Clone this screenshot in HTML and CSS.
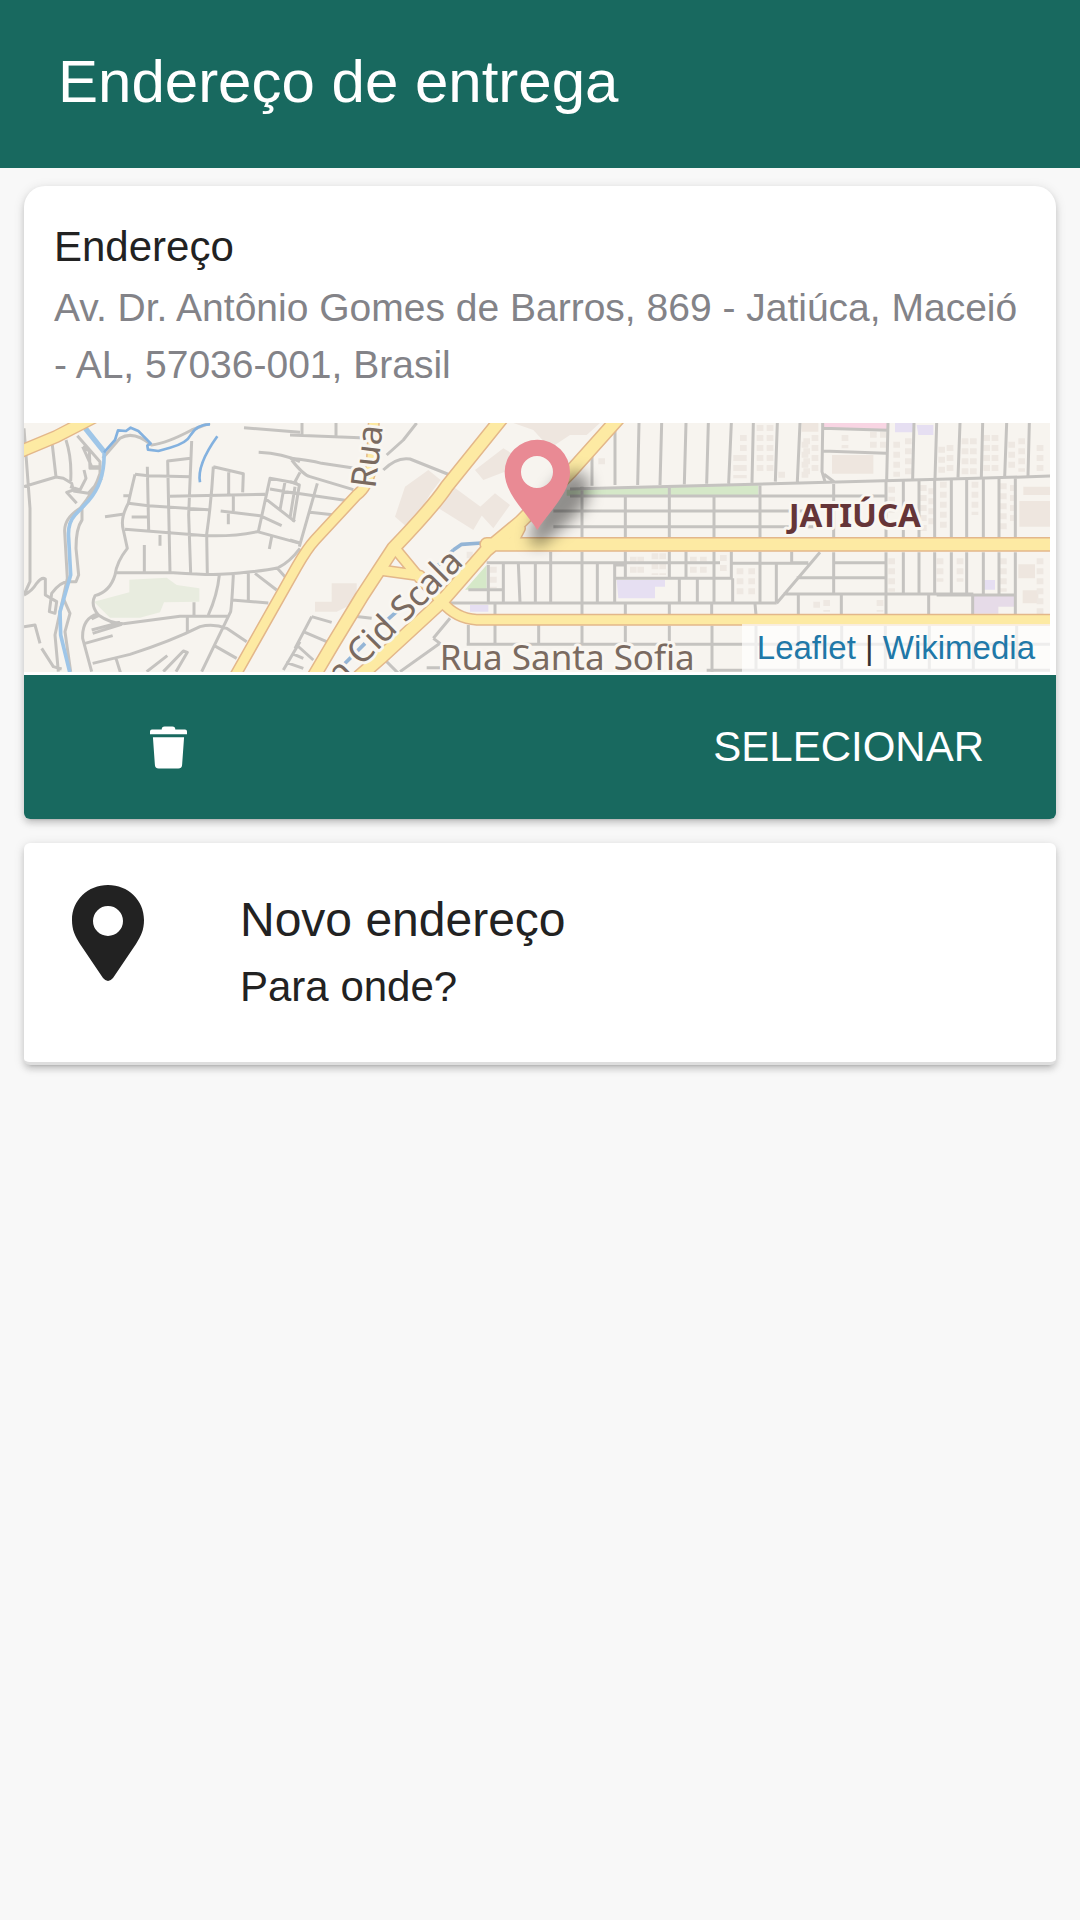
FILE: index.html
```html
<!DOCTYPE html>
<html lang="pt-BR">
<head>
<meta charset="utf-8">
<meta name="viewport" content="width=device-width, initial-scale=1">
<title>Endereço de entrega</title>
<link rel="stylesheet" href="styles.css">
</head>
<body>
<header class="toolbar">
  <h1 class="toolbar-title">Endereço de entrega</h1>
</header>
<main class="content">
  <article class="card address-card">
    <div class="address-text">
      <h2 class="address-title">Endereço</h2>
      <p class="address-line">Av. Dr. Antônio Gomes de Barros, 869 - Jatiúca, Maceió - AL, 57036-001, Brasil</p>
    </div>
    <div class="map">
      <svg class="map-canvas" viewBox="12 24 3078 747" preserveAspectRatio="xMidYMid slice" role="img" aria-label="Mapa">
        <defs>
          <filter id="soft" x="-50%" y="-50%" width="200%" height="200%"><feGaussianBlur stdDeviation="22"/></filter>
        </defs>
        <rect x="0" y="0" width="3110" height="800" fill="#f7f4ef"/>
        <!-- parks -->
        <path fill="#e8ecdf" d="M222 560L328 532V494L440 488L470 510L538 520V560L432 562L420 592L360 608H270Z"/>
        <path fill="#d5e8c8" d="M1640 224L1950 216L2215 210V242H1640ZM1335 524L1400 450V524Z"/>
        <!-- buildings and blocks -->
        <g fill="#eee6df">
          <path d="M1155 215L1225 165L1262 195L1232 235L1185 315L1165 340L1125 305ZM1300 215L1395 285L1360 345L1240 270ZM1370 285L1425 235L1470 270L1420 340ZM1365 165L1450 100L1500 130L1480 160L1390 195ZM1480 24H1740L1700 60H1650L1590 100L1540 45ZM935 505H1010V535L980 575L950 590H885V560H935Z"/>
          <path d="M2436 120H2560V176H2436ZM2998 258H3095V335H2998ZM2995 448H3045V490H2995ZM3008 526H3055V565H3008ZM3010 215H3090V240H3010ZM2345 24H2395V50H2345Z"/>
        </g>
        <g stroke="#eee8e2" stroke-width="20" stroke-dasharray="18 12" fill="none">
          <path d="M1840 425V480M1862 425V480M1905 415V480M1928 415V480M2020 425V475M2050 425V475M2110 420V475M2160 460V550M2195 460V550M1745 130V160M2150 120V190M2170 60V190M2220 30V180M2250 30V170M2285 170V190M2360 70V190M2385 60V180M2475 60V100M2560 50V110M2590 50V105M2630 80V185M2665 70V180M2765 95V185M2790 90V180M2835 70V185M2860 70V180M2900 60V180M2925 60V180M2975 80V170M3005 70V170M3060 90V170M2355 80V190"/>
          <path d="M2615 215V300M2710 210V350M2735 220V340M2770 200V350M2865 200V300M2950 205V350M2980 210V330M2615 430V530M2760 430V500M2820 430V500M2950 430V530M2420 555V590M2580 555V590M3060 430V600M2390 560V590M1420 455V520M1340 420H1385"/>
        </g>
        <path fill="#e6dff2" d="M1790 495H1935V515H1905V550H1795ZM2625 24H2680V52H2625ZM2690 30H2740V60H2695ZM2892 495H2925V524H2892ZM1350 570H1405V590H1350Z"/>
        <path fill="#e6dbe8" d="M2860 540H2985V575H2935V596H2860Z"/>
        <path fill="#f8d5e3" d="M2410 24H2605V42H2410Z"/>
        <!-- minor streets -->
        <g fill="none" stroke="#c5c3c0" stroke-width="9" stroke-linejoin="round">
          <path d="M12 40L30 280V500L12 540M12 215L108 186L97 90M108 186L130 190L155 205L160 225L140 232L170 265M138 75Q156 130 152 198M172 62L240 140V175Q225 225 180 280Q132 310 134 350L142 490L105 660L115 770M188 95L215 155H245M188 95L208 108L210 160H238M192 165L198 190L180 225L150 215M160 228L205 235L245 190M248 130L300 70Q340 45 395 90Q440 85 515 45L570 24M245 180Q220 240 186 280V315Q168 340 168 400L176 480L168 500H150M12 540Q35 530 50 505Q65 485 76 492V540L110 560L105 595L88 590L95 535Q120 500 145 500M12 635L45 630L60 685M65 700L100 755L125 762M130 550L150 595L135 650L152 770"/>
          <path d="M512 130L443 138L450 470M345 178L385 182L512 185M345 178Q330 240 325 265Q300 310 310 345L322 400Q290 440 285 480Q270 530 225 542Q210 570 235 600Q270 625 310 626M382 155L386 345M515 78L506 300L512 475M580 155L670 176L668 232M580 155Q574 260 560 358L562 478M310 242H328M325 265L385 272L565 284M450 244L735 238M640 238V288M626 172V238M255 305L308 298M335 306H382M315 343L560 362Q640 365 712 350L840 385M602 288L720 302L785 332M625 290V328M420 360V392M373 390V470M290 473H460Q560 480 600 478Q720 470 775 458Q810 440 840 400M755 365L748 402M715 350L750 190L832 205M735 250L825 320M750 222L832 236M795 200L780 285M825 215L810 310M672 38L840 52M716 112Q790 116 840 140M598 480Q592 540 565 600M640 480Q636 560 632 590L545 770M685 475V555M636 555L745 564M705 475L770 525M772 460L795 485M310 626L480 604L625 604M502 605V650M522 562V600M235 595Q185 610 188 670L215 770M215 645L300 622M218 655L305 628M215 612L240 600M195 685L278 662M218 745L330 718Q450 680 540 635Q580 625 620 640L680 680M288 730L302 775M380 770L442 722M430 770L490 708L502 712L468 770M583 692L650 730M840 680L790 765M815 715L850 730M798 742L850 760"/>
          <path d="M810 60L1020 68M846 24V62M948 24V62M810 130Q870 136 905 145L1005 160M1090 165Q1130 125 1170 132L1290 180M1100 120L1150 75L1190 24M815 135Q850 180 870 185L1000 224M810 200L838 210L820 320M840 172L825 200M810 232L990 258M892 205L838 395M870 292L945 300M810 375L845 385M875 605L935 622M875 605L825 700M850 650L920 680M830 690L880 735M990 602L1055 610M1240 670L1260 685L1140 770M1290 610L1240 670M1095 735L1135 775"/>
          <path d="M1400 443H2100M1270 564H2270M1345 524H1450V443M1405 450V560M1450 450V560M1495 445L1500 562M1546 445V562M1592 410V565M1345 630V688M1425 565V690M1556 630V688M1340 688H3100M1220 758H1260M2060 766H3100"/>
          <path d="M1716 110V212M1785 45V210M1857 24L1853 210M1925 24L1920 210M1998 24L1993 208M2065 24L2060 206M2134 24L2126 205M2200 24L2196 203M2272 24L2266 200M2340 24L2332 200M1650 222L2340 204L2870 190L3100 183M1650 243H2600M1600 288H2380M1600 335H2380M1686 215V368M1816 240V368M1948 215V368M2082 240V368M2220 205V368M2441 200V368M1816 410V488M1948 410V488M1998 410V488M2082 410V564M2134 410V490M2138 490V564M2220 410V565M2315 410V443H2365M2138 445H2365M2269 445V565M1686 410V600M1732 445V562M1784 445V562M1784 490H2136M1784 450H1816M1978 492V562M2032 492V562M2075 566V600M2205 566L2208 600M2335 536V600M2400 412L2270 565M2330 488H2598M2290 537H2860M1816 566V600M1948 566V600M1686 632V688M1816 632V688M1948 632V688M2076 632V770M2208 632V770M2335 632V770M2465 632V770M2596 632V770M2728 632V770M2860 632V770M2990 632V770"/>
          <path d="M2408 24V40L2604 46M2604 24L2600 198M2408 40L2406 170L2415 200M2412 178L2442 200M2408 108L2598 115M2682 24L2678 192M2750 24L2745 192M2820 24L2814 188M2888 24L2884 188M2960 24L2954 186M3028 24L3024 185M2598 195V368M2650 195V368M2697 195V368M2744 190V368M2794 190V368M2840 190V368M2890 190V368M2937 190V368M2986 190V368M2441 412V536M2441 443H2598M2598 412V600M2650 412V538M2697 412V538M2744 412V538M2794 412V538M2840 412V538M2890 412V538M2937 412V538M2986 412V600M2750 540H2986M2464 540V600M2726 540V600M2858 540V600"/>
        </g>
        <!-- water -->
        <g fill="none" stroke="#9fc6e8" stroke-linejoin="round">
          <path stroke-width="16" d="M196 40L252 110"/>
          <path stroke-width="11" d="M252 110Q256 200 205 258L165 300Q142 325 146 370L152 480L120 590L122 660L150 775"/>
          <path stroke-width="8" stroke="#83b1df" d="M252 112L285 75L294 46L318 48L332 38L355 48L392 85L382 92L384 104L415 108L450 98Q500 85 512 60Q530 28 570 28M592 64Q530 150 540 202"/>
          <path stroke-width="11" stroke="#94b5d6" d="M1300 405L1325 388L1385 384M1255 450L1300 405M1130 590L1090 625M1035 685L970 750"/>
        </g>
        <!-- main avenues: casing, then fill -->
        <g fill="none" stroke="#e3b78a" stroke-linejoin="round" stroke-linecap="round">
          <path stroke-width="40" d="M0 110L110 64L230 2"/>
          <path stroke-width="36" d="M1062 10L1055 150Q1045 215 1010 240L885 375Q862 400 830 455L638 795M1125 400L1195 485L1265 560M1080 465L1200 482M1265 560Q1310 612 1370 614H3110M1475 388L1500 340"/>
          <path stroke-width="44" d="M1445 10L1280 215Q1240 275 1120 400L1025 545L940 685L872 800M1795 10L1650 172L1500 322L1400 405L1265 560L1080 730L1000 800M1400 388H3110"/>
        </g>
        <g fill="none" stroke="#fdeaa3" stroke-linejoin="round" stroke-linecap="round">
          <path stroke-width="32" d="M0 110L110 64L230 2"/>
          <path stroke-width="27" d="M1062 10L1055 150Q1045 215 1010 240L885 375Q862 400 830 455L638 795M1125 400L1195 485L1265 560M1080 465L1200 482M1265 560Q1310 612 1370 614H3110M1475 388L1500 340"/>
          <path stroke-width="35" d="M1445 10L1280 215Q1240 275 1120 400L1025 545L940 685L872 800M1795 10L1650 172L1500 322L1400 405L1265 560L1080 730L1000 800M1400 388H3110"/>
        </g>
        <!-- street and district names -->
        <text class="map-street" transform="translate(1066 222) rotate(-83)">Rua</text>
        <text class="map-street" text-anchor="end" transform="translate(1334 446) rotate(-45)">n Cid Scala</text>
        <text class="map-street" x="1259" y="765">Rua Santa Sofia</text>
        <text class="map-district" x="2306" y="336">JATIÚCA</text>
        <!-- marker -->
        <path filter="url(#soft)" fill="#000" fill-opacity=".42" d="M1530 385Q1535 300 1600 215Q1650 150 1695 180Q1730 240 1670 300Q1620 345 1560 395Z"/>
        <path fill="#e98a94" fill-rule="evenodd" d="M1552 345C1522 296 1454 236 1454 172A98 98 0 0 1 1650 172C1650 236 1582 296 1552 345ZM1551 123A48 48 0 1 0 1551 219A48 48 0 1 0 1551 123Z"/>
      </svg>
      <div class="map-attribution"><a href="#leaflet">Leaflet</a> | <a href="#wikimedia">Wikimedia</a></div>
    </div>
    <div class="actions">
      <button class="action" type="button" aria-label="Excluir endereço">
        <svg class="trash-icon" viewBox="0 0 38 43" aria-hidden="true">
          <path fill="currentColor" d="M2 3H12Q12 0 15 0H23Q26 0 26 3H36Q38 3 38 5V8H0V5Q0 3 2 3ZM3 11H35L33 39Q33 43 29 43H9Q5 43 5 39Z"/>
        </svg>
      </button>
      <button class="action" type="button">SELECIONAR</button>
    </div>
  </article>
  <button class="card new-address" type="button">
    <svg class="pin-icon" viewBox="0 0 72 96" aria-hidden="true">
      <path fill="currentColor" fill-rule="evenodd" d="M36 0C16 0 0 15 0 35C0 45 3 51 8 59L31 93Q36 99 41 93L64 59C69 51 72 45 72 35C72 15 56 0 36 0ZM36 21A15 15 0 1 1 36 51A15 15 0 1 1 36 21Z"/>
    </svg>
    <span class="new-address-text">
      <span class="new-address-title">Novo endereço</span>
      <span class="new-address-hint">Para onde?</span>
    </span>
  </button>
</main>
</body>
</html>
```
FILE: styles.css
```css
* {
  box-sizing: border-box;
}

body {
  margin: 0;
  min-height: 100vh;
  background: #f8f8f8;
  color: #222;
  font-family: "Liberation Sans", Arial, Helvetica, sans-serif;
}

h1, h2, p {
  margin: 0;
  font-weight: 400;
}

button {
  border: 0;
  margin: 0;
  background: none;
  color: inherit;
  font: inherit;
  cursor: pointer;
}

.toolbar {
  padding: 46px 58px 50px;
  background: #18695f;
  color: #fff;
}

.toolbar-title {
  font-size: 60px;
  line-height: 72px;
}

.content {
  display: flex;
  flex-direction: column;
  gap: 24px;
  padding: 18px 24px;
}

.card {
  background: #fff;
  box-shadow: 0 4px 6px rgba(0, 0, 0, 0.14), 0 6px 3px -6px rgba(0, 0, 0, 0.2), 0 2px 12px rgba(0, 0, 0, 0.12);
}

.address-card {
  border-radius: 21px 21px 6px 6px;
  overflow: hidden;
}

.address-text {
  display: flex;
  flex-direction: column;
  gap: 8px;
  padding: 37px 30px 30px;
}

.address-title {
  font-size: 42px;
  line-height: 48px;
}

.address-line {
  color: #838388;
  font-size: 39px;
  line-height: 57px;
}

.map {
  position: relative;
  height: 249px;
  margin: 0 6px 3px 0;
  overflow: hidden;
}

.map-canvas {
  display: block;
  width: 100%;
  height: 100%;
}

.map-street,
.map-district {
  font-family: "Noto Sans", sans-serif;
  paint-order: stroke;
  stroke: #f9f6f1;
  stroke-width: 18px;
  stroke-linejoin: round;
}

.map-street {
  fill: #7a6a60;
  font-size: 105px;
}

.map-district {
  fill: #653538;
  font-size: 99px;
  font-weight: 700;
}

.map-attribution {
  position: absolute;
  right: 0;
  bottom: 0;
  padding: 0 15px;
  background: rgba(255, 255, 255, 0.7);
  color: #333;
  font-size: 33px;
  line-height: 48px;
}

.map-attribution a {
  color: #2078a8;
  text-decoration: none;
}

.actions {
  display: flex;
  justify-content: space-between;
  background: #18695f;
  color: #fff;
}

.action {
  display: flex;
  align-items: center;
  height: 144px;
  padding: 0 72px 0 126px;
  font-size: 42px;
}

.trash-icon {
  width: 37px;
  height: 43px;
}

.new-address {
  display: flex;
  align-items: flex-start;
  gap: 96px;
  padding: 42px 48px 51px;
  border-bottom: 3px solid #dedede;
  border-radius: 6px;
  text-align: left;
}

.pin-icon {
  flex: none;
  width: 72px;
  height: 96px;
}

.new-address-text {
  display: flex;
  flex-direction: column;
  gap: 16px;
  padding-top: 8px;
}

.new-address-title {
  font-size: 48px;
  line-height: 54px;
}

.new-address-hint {
  font-size: 42px;
  line-height: 48px;
}
```
